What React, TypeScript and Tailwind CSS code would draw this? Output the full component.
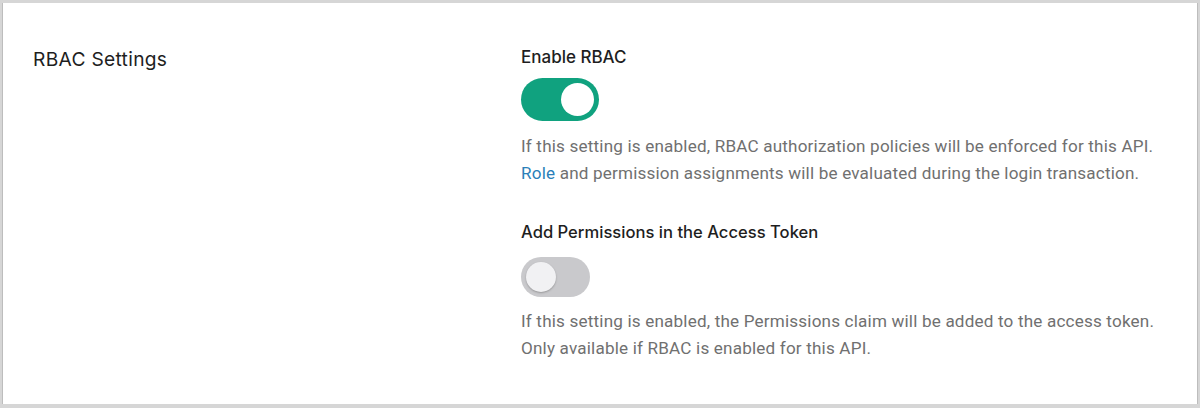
import React from "react";

function Toggle({ on, w, h, k }: { on: boolean; w: number; h: number; k: number }) {
  return (
    <div
      className={on ? "relative rounded-full bg-[#10a27f]" : "relative rounded-full bg-[#c9c9cc]"}
      style={{ width: w, height: h }}
    >
      <div
        className={on ? "absolute rounded-full bg-white" : "absolute rounded-full bg-[#f1f1f3] shadow-[0_1px_2px_rgba(0,0,0,0.25)]"}
        style={{ width: k, height: k, top: (h - k) / 2, left: on ? w - k - (h - k) / 2 : (h - k) / 2 }}
      />
    </div>
  );
}

export default function App() {
  return (
    <div className="w-[1200px] h-[408px] bg-[#d6d6d6] pt-[3px] px-[2px] pb-[4px]" style={{ fontFamily: "Inter, 'Noto Sans', sans-serif" }}>
      <div className="h-full bg-white border-x border-[#bdbdbd] flex">
        <div className="w-[518px] pl-[30px] pt-[44px] text-[19.2px] leading-[24px] tracking-[0.3px] text-[#1e1e1e]">RBAC Settings</div>
        <div className="flex-1 pt-[42px]">
          <div className="text-[17px] font-medium text-[#1e1e1e] leading-[24px]">Enable RBAC</div>
          <div className="mt-[9px]">
            <Toggle on w={78} h={43} k={33} />
          </div>
          <p className="mt-[12px] text-[17.1px] leading-[27px] tracking-[0.18px] text-[#707070]" style={{ fontFamily: "Roboto, sans-serif" }}>
            If this setting is enabled, RBAC authorization policies will be enforced for this API.
            <br />
            <span className="text-[#2b7fb9]">Role</span> and permission assignments will be evaluated during the login transaction.
          </p>
          <div className="mt-[33px] text-[16.6px] font-medium text-[#1e1e1e] leading-[24px]">Add Permissions in the Access Token</div>
          <div className="mt-[13px]">
            <Toggle on={false} w={69} h={40} k={30} />
          </div>
          <p className="mt-[11px] text-[17.1px] leading-[27px] tracking-[0.18px] text-[#707070]" style={{ fontFamily: "Roboto, sans-serif" }}>
            If this setting is enabled, the Permissions claim will be added to the access token.
            <br />
            Only available if RBAC is enabled for this API.
          </p>
        </div>
      </div>
    </div>
  );
}
